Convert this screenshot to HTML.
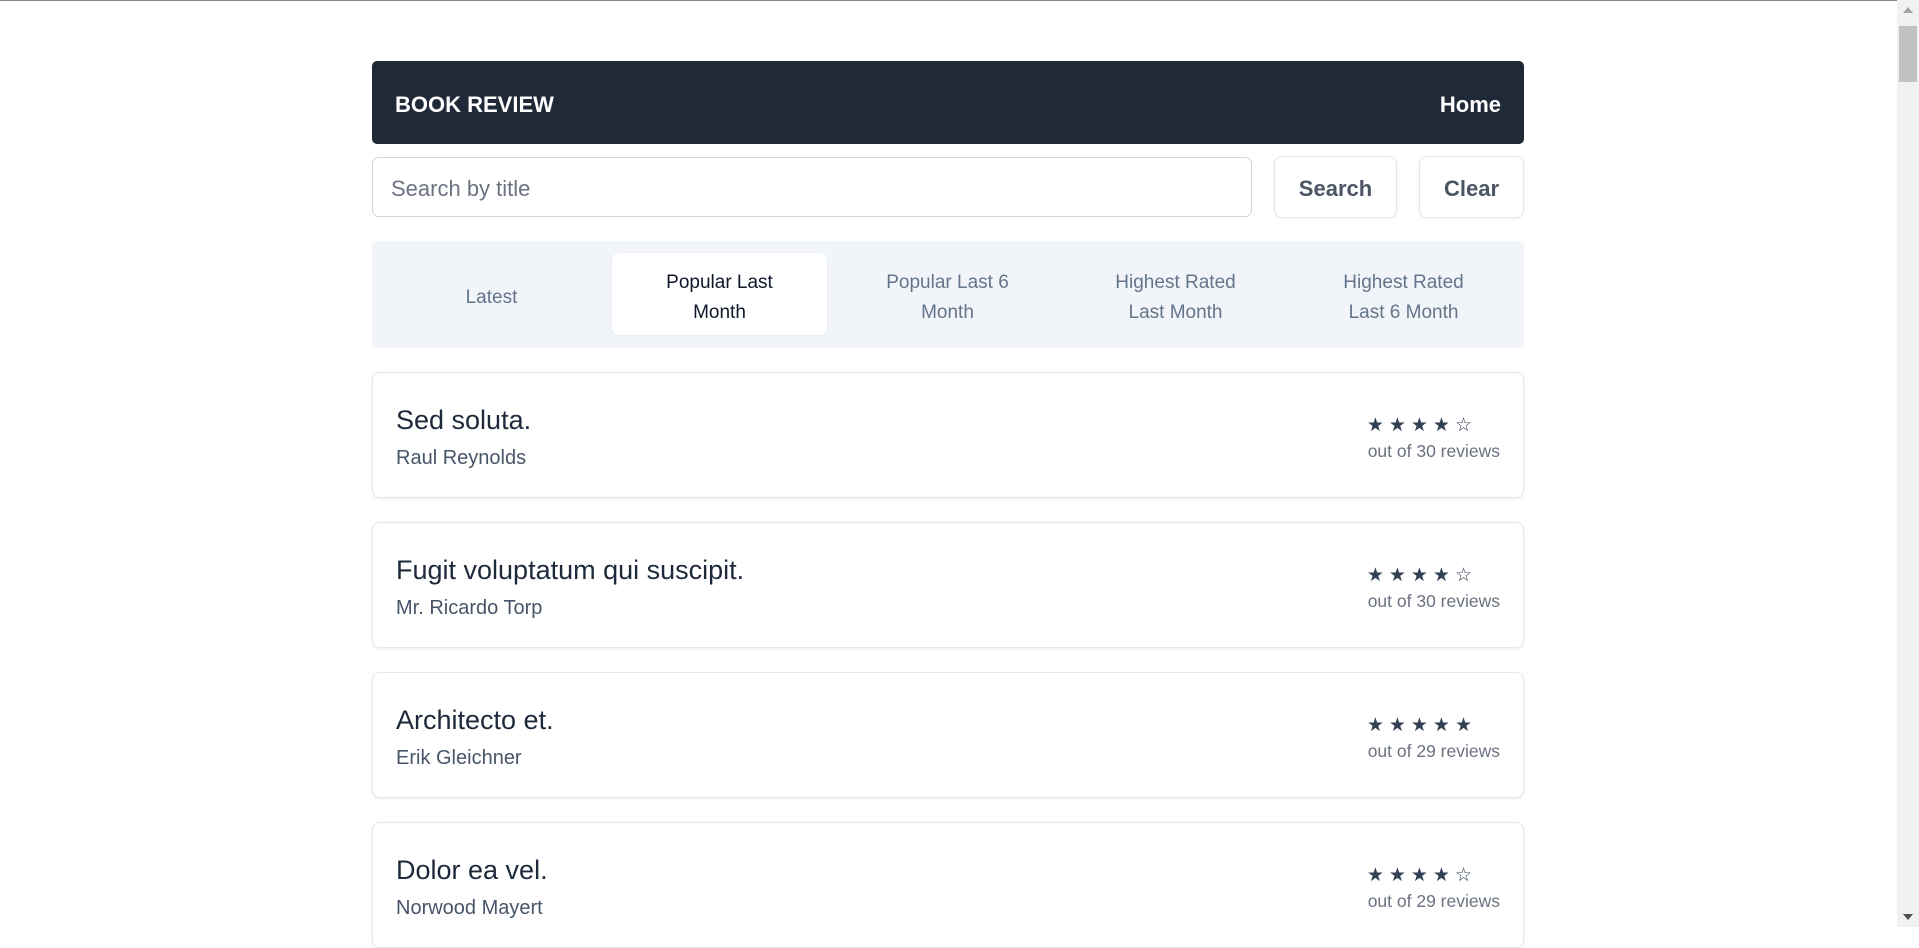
<!DOCTYPE html>
<html><head><meta charset="utf-8"><style>
*{box-sizing:border-box;margin:0;padding:0}
html,body{width:1919px;height:927px;overflow:hidden;background:#fff;font-family:"Liberation Sans",sans-serif}
.topline{position:absolute;left:0;top:0;width:1919px;height:1px;background:#888}
.sb{position:absolute;right:0;top:0;width:22px;height:927px;background:#f1f1f1}
.sb .th{position:absolute;left:2px;top:26px;width:18px;height:56px;background:#c1c1c1}
.sb .up{position:absolute;left:6px;top:7px;border:5px solid transparent;border-bottom:6px solid #a3a3a3;border-top:0}
.sb .dn{position:absolute;left:6px;bottom:7px;border:5px solid transparent;border-top:6px solid #505050;border-bottom:0}
.hdr{position:absolute;left:372px;top:61px;width:1152px;height:83px;background:#1f2937;border-radius:5px;color:#fff;font-weight:bold}
.hdr .l{position:absolute;left:23px;top:31px;font-size:22px}
.hdr .r{position:absolute;right:23px;top:31px;font-size:22px}
.inp{position:absolute;left:372px;top:157px;width:880px;height:60px;border:1.5px solid #cbd5e1;border-radius:7px;font-size:22px;color:#6b7280;padding:18px 0 0 18px}
.btn{position:absolute;top:156px;height:62px;border:1.5px solid #e2e8f0;border-radius:8px;font-size:22px;color:#4b5563;text-align:center;padding-top:19px;font-weight:bold;box-shadow:0 1px 2px rgba(0,0,0,.06)}
.tabs{position:absolute;left:372px;top:241px;width:1152px;height:107px;background:#f1f5f9;border-radius:6px}
.tab{position:absolute;top:12px;width:215px;height:82px;padding-top:7px;font-size:19px;line-height:30px;color:#64748b;text-align:center;display:flex;align-items:center;justify-content:center}
.tab.act{background:#fff;border-radius:7px;color:#0f172a;box-shadow:0 1px 2px rgba(0,0,0,.05)}
.card{position:absolute;left:372px;width:1152px;height:126px;border:1.5px solid #e5e7eb;border-radius:8px;box-shadow:0 1px 3px rgba(0,0,0,.08)}
.card .t{position:absolute;left:23px;top:32px;font-size:27px;color:#1e293b}
.card .a{position:absolute;left:23px;top:74px;font-size:20px;color:#475569}
.card .s{position:absolute;right:46px;top:41px;font-size:19px;color:#334155;letter-spacing:5px}
.card .o{position:absolute;right:23px;top:68px;font-size:17.5px;color:#6b7280}
</style></head><body>
<div class="topline"></div>
<div class="sb"><div class="up"></div><div class="th"></div><div class="dn"></div></div>
<div class="hdr"><div class="l">BOOK REVIEW</div><div class="r">Home</div></div>
<div class="inp">Search by title</div>
<div class="btn" style="left:1274px;width:123px">Search</div>
<div class="btn" style="left:1419px;width:105px">Clear</div>
<div class="tabs">
<div class="tab" style="left:12px">Latest</div>
<div class="tab act" style="left:240px">Popular Last<br>Month</div>
<div class="tab" style="left:468px">Popular Last 6<br>Month</div>
<div class="tab" style="left:696px">Highest Rated<br>Last Month</div>
<div class="tab" style="left:924px">Highest Rated<br>Last 6 Month</div>
</div>
<div class="card" style="top:372px"><div class="t">Sed soluta.</div><div class="a">Raul Reynolds</div><div class="s">★★★★☆</div><div class="o">out of 30 reviews</div></div>
<div class="card" style="top:522px"><div class="t">Fugit voluptatum qui suscipit.</div><div class="a">Mr. Ricardo Torp</div><div class="s">★★★★☆</div><div class="o">out of 30 reviews</div></div>
<div class="card" style="top:672px"><div class="t">Architecto et.</div><div class="a">Erik Gleichner</div><div class="s">★★★★★</div><div class="o">out of 29 reviews</div></div>
<div class="card" style="top:822px"><div class="t">Dolor ea vel.</div><div class="a">Norwood Mayert</div><div class="s">★★★★☆</div><div class="o">out of 29 reviews</div></div>
</body></html>
